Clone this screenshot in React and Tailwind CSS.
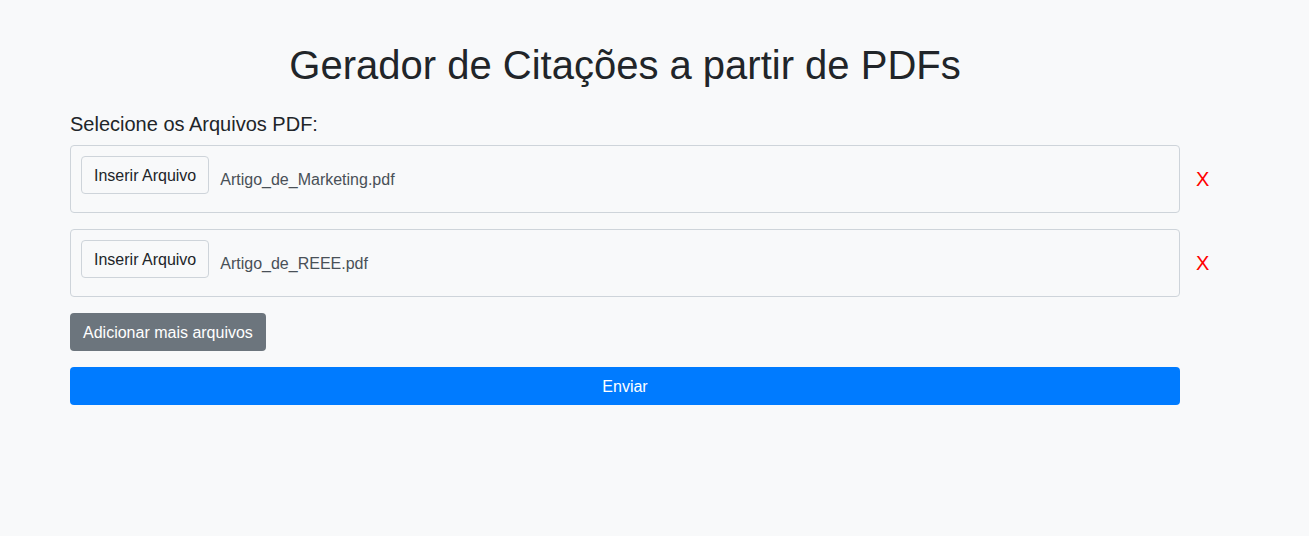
const files = ["Artigo_de_Marketing.pdf", "Artigo_de_REEE.pdf"];

export default function App() {
  return (
    <div className="min-h-[536px] bg-[#f8f9fa] font-['Liberation_Sans',Arial,sans-serif] text-[#212529]">
      <div className="pl-[70px] pt-[41px]">
        <div className="w-[1110px]">
          <h1 className="text-center text-[40px] leading-[48px] font-normal">
            Gerador de Citações a partir de PDFs
          </h1>
          <label className="block mt-[23px] mb-[9px] text-[20px] leading-6">
            Selecione os Arquivos PDF:
          </label>
        </div>

        <div className="flex flex-col gap-4">
          {files.map((name) => (
            <div key={name} className="flex items-center">
              <div className="w-[1110px] h-[68px] border border-[#ced4da] rounded p-[10px] flex items-start gap-[11px]">
                <button className="px-3 pt-[7px] pb-[5px] leading-6 border border-[#ced4da] rounded bg-[#f8f9fa] text-base text-[#212529]">
                  Inserir Arquivo
                </button>
                <span className="text-base leading-6 text-[#495057] mt-[12px]">{name}</span>
              </div>
              <button className="ml-4 text-[20px] leading-6 text-[#ff0000]">X</button>
            </div>
          ))}
        </div>

        <button className="mt-4 px-3 pt-[7px] pb-[5px] leading-6 border border-transparent rounded bg-[#6c757d] text-white text-base">
          Adicionar mais arquivos
        </button>
        <button className="block mt-4 w-[1110px] pt-[7px] pb-[5px] leading-6 border border-transparent rounded bg-[#007bff] text-white text-base">
          Enviar
        </button>
      </div>
    </div>
  );
}
